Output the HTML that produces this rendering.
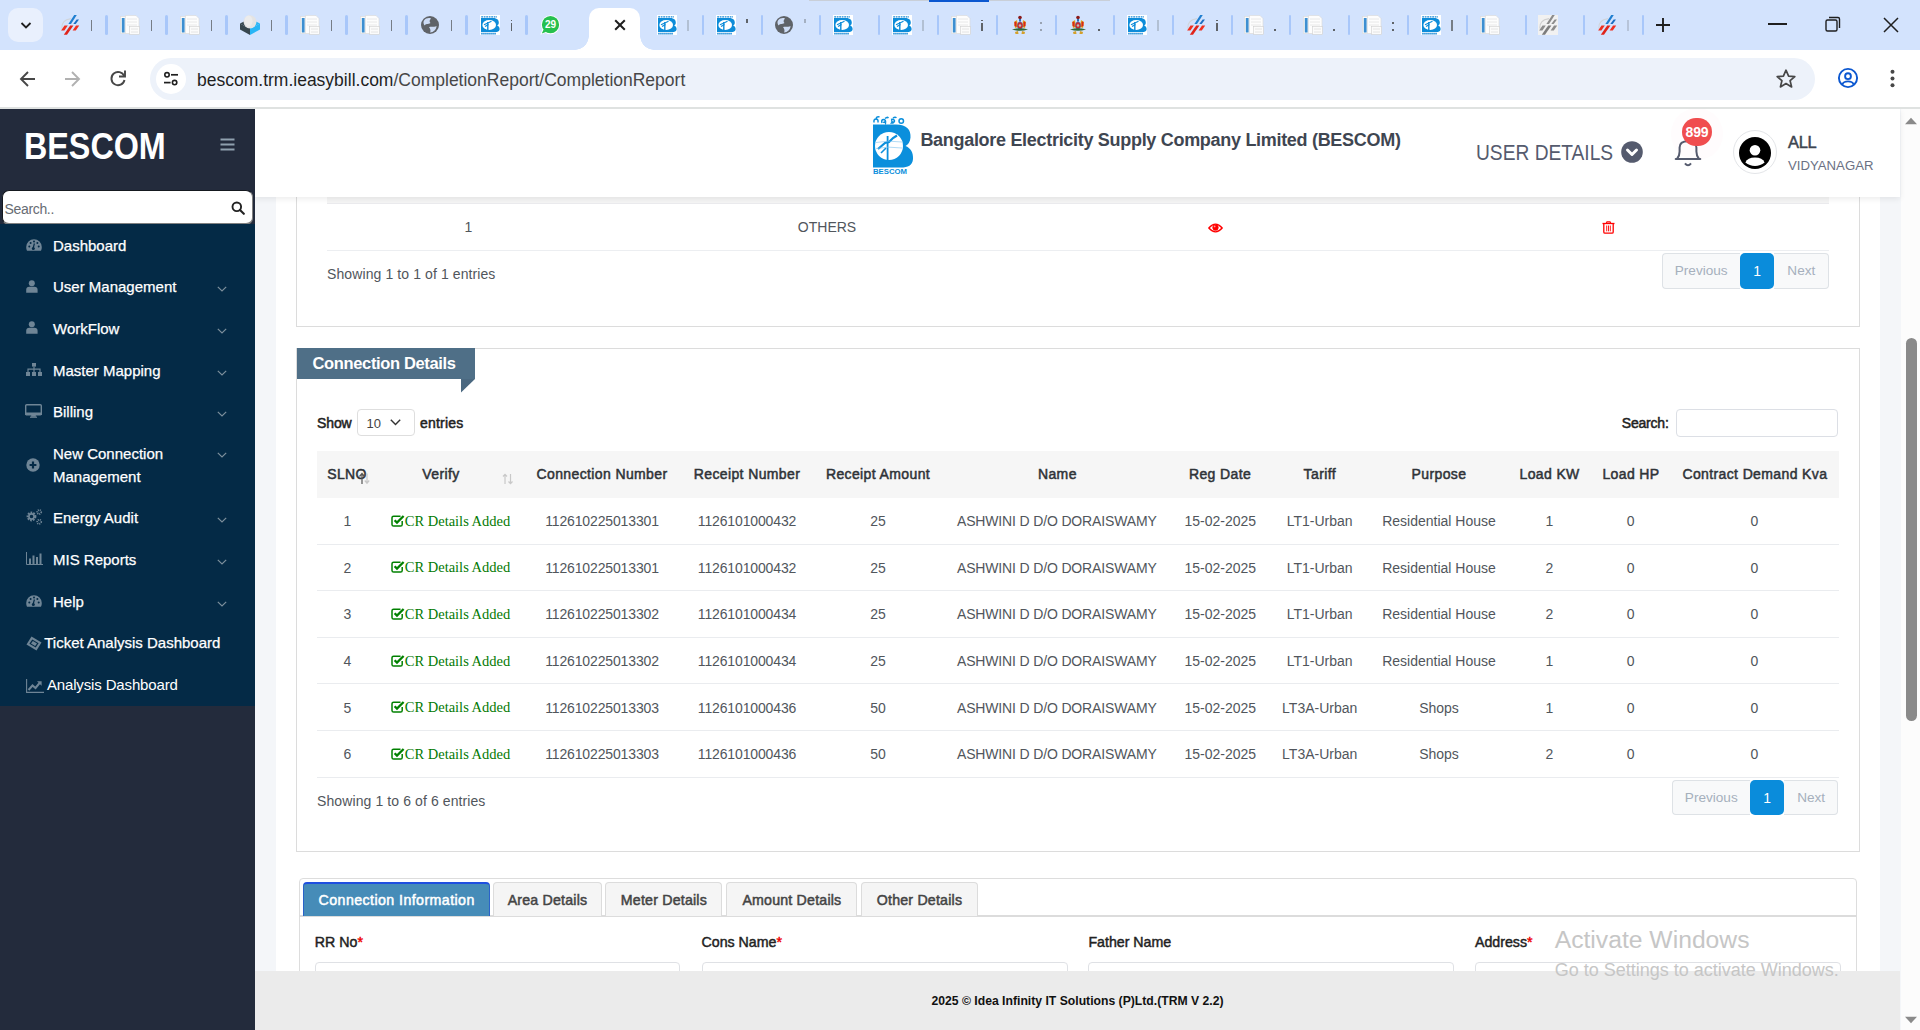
<!DOCTYPE html>
<html><head><meta charset="utf-8"><title>Completion Report</title>
<style>
*{box-sizing:border-box;margin:0;padding:0}
html,body{width:1920px;height:1030px;overflow:hidden;background:#fff;font-family:"Liberation Sans",sans-serif}
.abs{position:absolute}
#tabstrip{position:absolute;left:0;top:0;width:1920px;height:50px;background:#d3e3fd}
#toolbar{position:absolute;left:0;top:50px;width:1920px;height:57px;background:#fff;border-radius:10px 10px 0 0}
#tbline{position:absolute;left:0;top:107px;width:1920px;height:2px;background:#dfe2e1}
#page{position:absolute;left:0;top:109px;width:1920px;height:921px;background:#f4f6f9;overflow:hidden}
#sidebar{position:absolute;left:0;top:0;width:255px;height:921px;background:#232b3c}
#header{position:absolute;left:255px;top:0;width:1645px;height:88px;background:#fff;box-shadow:0 2px 6px rgba(0,0,0,.08)}
#container{position:absolute;left:276px;top:0;width:1604px;height:921px;background:#fff}
#footer{position:absolute;left:255px;top:862px;width:1645px;height:60px;background:#ebebeb}
#scrollbar{position:absolute;left:1901px;top:0;width:19px;height:921px;background:#fcfcfc}

</style></head><body>
<svg width="0" height="0" style="position:absolute">
<defs>
<symbol id="i-stripes" viewBox="0 0 20 20">
<path d="M1.8 13.5 Q1 5 11 3.6" fill="none" stroke="#d0d4da" stroke-width="1.1"/>
<path d="M14.2 0 H16.8 L11 9 H8.4Z" fill="#1f7fd0"/>
<path d="M16.6 4.6 H19 L15.7 9 H13.3Z" fill="#1b6fc2"/>
<path d="M4.5 10.5 H7.8 L4.4 15.6 H1.1Z" fill="#f0301f"/>
<path d="M10.2 10.5 H13.4 L7 19.8 H3.8Z" fill="#e0241a"/>
<path d="M16 10.5 H19.2 L15.8 15.6 H12.6Z" fill="#f0301f"/>
</symbol>
<symbol id="i-stripesg" viewBox="0 0 20 20">
<rect x="0" y="0" width="20" height="20" fill="#f1f1f1"/>
<path d="M1.8 13.5 Q1 5 11 3.6" fill="none" stroke="#cfcfcf" stroke-width="1.1"/>
<path d="M14.2 0 H16.8 L11 9 H8.4Z" fill="#8c8c8c"/>
<path d="M16.6 4.6 H19 L15.7 9 H13.3Z" fill="#8c8c8c"/>
<path d="M4.5 10.5 H7.8 L4.4 15.6 H1.1Z" fill="#8c8c8c"/>
<path d="M10.2 10.5 H13.4 L7 19.8 H3.8Z" fill="#7c7c7c"/>
<path d="M16 10.5 H19.2 L15.8 15.6 H12.6Z" fill="#8c8c8c"/>
</symbol>
<symbol id="i-doc" viewBox="0 0 20 20">
<rect x="0.5" y="1.5" width="12" height="17" fill="#fafafa" stroke="#dcdcdc" stroke-width="0.6"/>
<rect x="1.8" y="3" width="2.8" height="14.5" fill="#3d8fd1"/>
<path d="M5.5 0.5 H16 L19 3.5 V18.5 H5.5Z" fill="#fdfdfd" stroke="#d8d8d8" stroke-width="0.6"/>
<path d="M7 4 H17 M7 7 H17 M7 10 H17" stroke="#e2e2e2" stroke-width="0.8"/>
<rect x="9.5" y="11.5" width="10" height="8" fill="#fbfbfb" stroke="#cfcfcf" stroke-width="0.6"/>
<path d="M11 14 H18 M11 17 H18" stroke="#e0e0e0" stroke-width="0.8"/>
</symbol>
<symbol id="i-cube" viewBox="0 0 20 20">
<path d="M0 8.5 L10 14 L10 20 L0 14.5Z" fill="#37474f"/>
<path d="M0 8.5 L5 6 L10 9 L10 14Z" fill="#37474f"/>
<path d="M10 14 L20 8.5 L20 14.5 L10 20Z" fill="#29b6f6"/>
<path d="M10 9 L15 6 L20 8.5 L10 14Z" fill="#29b6f6"/>
<ellipse cx="10" cy="6.8" rx="6.5" ry="6.5" fill="#e4e4e4"/>
<ellipse cx="8.5" cy="6" rx="4" ry="5.5" fill="#ececec"/>
</symbol>
<symbol id="i-globe" viewBox="0 0 20 20">
<circle cx="10" cy="10" r="9" fill="#5f6368"/>
<path d="M4 5.5 C6 3 9 2.5 11 3.5 C9.5 5 9 6.5 10.5 8 C8 9.5 5.5 8.5 4.5 10.5 C3.5 9 3 7 4 5.5Z" fill="#d3e3fd" opacity="0.95"/>
<path d="M9 12 C12 11 15 12.5 16.5 11 C16.5 14.5 13.5 17.5 10 17.5 C11 16 10.5 14 9 12Z" fill="#d3e3fd" opacity="0.95"/>
</symbol>
<symbol id="i-bescom" viewBox="0 0 20 20">
<rect x="0" y="0" width="20" height="20" fill="#fff"/>
<path d="M1.2 1.8 H17" stroke="#1c8ad6" stroke-width="1.2" stroke-dasharray="1.8 0.7"/>
<path d="M1 3 H13 C17.5 3 19 5.5 18.8 8 C18.6 9.5 17.8 10 17.2 10.5 C19.2 11.3 19.8 13.2 19.6 14.5 C19.3 16.5 17.5 17 15 17 H1Z" fill="#0d8cd9"/>
<ellipse cx="9.2" cy="10" rx="6.8" ry="4.9" fill="#fff"/>
<path d="M7.8 7 V15" stroke="#0d8cd9" stroke-width="1.4"/>
<path d="M4 9.8 L11.5 6.3 M5 11.5 L8.5 9.5" stroke="#0d8cd9" stroke-width="1.2"/>
<path d="M1.2 18.6 H16" stroke="#1c8ad6" stroke-width="1.6" stroke-dasharray="1.5 0.5"/>
</symbol>
<symbol id="i-wa" viewBox="0 0 20 20">
<circle cx="10.5" cy="9.7" r="9.5" fill="#fff"/>
<path d="M2.5 14 L0.3 19.8 L7 17.2Z" fill="#fff"/>
<path d="M3.6 14.6 L1.8 18.6 L6.4 16.8Z" fill="#25c04e"/>
<circle cx="10.5" cy="9.7" r="8.6" fill="#25c04e"/>
<text x="10.5" y="13.4" text-anchor="middle" font-family="Liberation Sans" font-weight="bold" font-size="10" fill="#fff">29</text>
</symbol>
<symbol id="i-emblem" viewBox="0 0 20 20">
<circle cx="10" cy="2.5" r="1.8" fill="#8b1a1a"/>
<rect x="9" y="4" width="2" height="2.5" fill="#2a6fb8"/>
<path d="M4 7 L7 5 L8 12 L5 13Z" fill="#e0a81a"/>
<path d="M16 7 L13 5 L12 12 L15 13Z" fill="#e0a81a"/>
<path d="M4.5 7 Q5.5 6 6.5 7 L6.5 12 L4.5 11Z" fill="#d9261c"/>
<path d="M15.5 7 Q14.5 6 13.5 7 L13.5 12 L15.5 11Z" fill="#d9261c"/>
<ellipse cx="10" cy="10.5" rx="2.6" ry="3.6" fill="#d02a2a" stroke="#3050a0" stroke-width="0.5"/>
<circle cx="10" cy="10.5" r="1.2" fill="#bbb"/>
<path d="M2 14.5 Q10 12 18 14.5 Q10 17 2 14.5Z" fill="#2f6a3a"/>
<path d="M5 17 L8 16 L8.5 19 L5.5 19Z M15 17 L12 16 L11.5 19 L14.5 19Z" fill="#d4a02a"/>
</symbol>
</defs></svg>
<div id="tabstrip">
<div class="abs" style="left:8px;top:8px;width:35px;height:34px;border-radius:10px;background:#e9f0fd"></div>
<svg class="abs" style="left:19px;top:19px" width="14" height="12" viewBox="0 0 14 12"><path d="M2.5 4 L7 8.5 L11.5 4" fill="none" stroke="#1f1f1f" stroke-width="1.8"/></svg>
<svg class="abs" style="left:60px;top:15px" width="20" height="20"><use href="#i-stripes"/></svg>
<div class="abs" style="left:90.75px;top:20px;width:1.3px;height:11px;background:#5f6368;opacity:0.8"></div>
<div class="abs" style="left:105.20px;top:14.5px;width:2.5px;height:20px;border-radius:1.5px;background:#a8c7fa"></div>
<svg class="abs" style="left:120px;top:15px" width="20" height="20"><use href="#i-doc"/></svg>
<div class="abs" style="left:150.75px;top:20px;width:1.3px;height:11px;background:#5f6368;opacity:0.8"></div>
<div class="abs" style="left:165.20px;top:14.5px;width:2.5px;height:20px;border-radius:1.5px;background:#a8c7fa"></div>
<svg class="abs" style="left:180px;top:15px" width="20" height="20"><use href="#i-doc"/></svg>
<div class="abs" style="left:210.75px;top:20px;width:1.3px;height:11px;background:#5f6368;opacity:0.8"></div>
<div class="abs" style="left:225.20px;top:14.5px;width:2.5px;height:20px;border-radius:1.5px;background:#a8c7fa"></div>
<svg class="abs" style="left:240px;top:15px" width="20" height="20"><use href="#i-cube"/></svg>
<div class="abs" style="left:270.75px;top:20px;width:1.3px;height:11px;background:#5f6368;opacity:0.8"></div>
<div class="abs" style="left:285.20px;top:14.5px;width:2.5px;height:20px;border-radius:1.5px;background:#a8c7fa"></div>
<svg class="abs" style="left:300px;top:15px" width="20" height="20"><use href="#i-doc"/></svg>
<div class="abs" style="left:330.75px;top:20px;width:1.3px;height:11px;background:#5f6368;opacity:0.8"></div>
<div class="abs" style="left:345.20px;top:14.5px;width:2.5px;height:20px;border-radius:1.5px;background:#a8c7fa"></div>
<svg class="abs" style="left:360px;top:15px" width="20" height="20"><use href="#i-doc"/></svg>
<div class="abs" style="left:390.75px;top:20px;width:1.3px;height:11px;background:#5f6368;opacity:0.8"></div>
<div class="abs" style="left:405.20px;top:14.5px;width:2.5px;height:20px;border-radius:1.5px;background:#a8c7fa"></div>
<svg class="abs" style="left:420px;top:15px" width="20" height="20"><use href="#i-globe"/></svg>
<div class="abs" style="left:450.75px;top:20px;width:1.3px;height:11px;background:#5f6368;opacity:0.8"></div>
<div class="abs" style="left:465.20px;top:14.5px;width:2.5px;height:20px;border-radius:1.5px;background:#a8c7fa"></div>
<svg class="abs" style="left:480px;top:15px" width="20" height="20"><use href="#i-bescom"/></svg>
<div class="abs" style="left:510.75px;top:23px;width:1.5px;height:8px;background:#5f6368;opacity:1"></div><div class="abs" style="left:510.75px;top:19.5px;width:1.5px;height:1.5px;background:#5f6368;opacity:1"></div>
<div class="abs" style="left:525.20px;top:14.5px;width:2.5px;height:20px;border-radius:1.5px;background:#a8c7fa"></div>
<svg class="abs" style="left:540px;top:15px" width="20" height="20"><use href="#i-wa"/></svg>

<div class="abs" style="left:589px;top:7.5px;width:51px;height:42.5px;background:#fff;border-radius:10px 10px 0 0"></div>
<div class="abs" style="left:575px;top:36px;width:14px;height:14px;background:radial-gradient(circle at 0 0, #d3e3fd 13.5px, #fff 14px)"></div>
<div class="abs" style="left:640px;top:36px;width:14px;height:14px;background:radial-gradient(circle at 100% 0, #d3e3fd 13.5px, #fff 14px)"></div>
<svg class="abs" style="left:614px;top:19px" width="12" height="12" viewBox="0 0 12 12"><path d="M1.2 1.2 L10.8 10.8 M10.8 1.2 L1.2 10.8" stroke="#1f1f1f" stroke-width="2"/></svg>
<svg class="abs" style="left:657.00px;top:15px" width="20" height="20"><use href="#i-bescom"/></svg>
<div class="abs" style="left:687.25px;top:20px;width:1.3px;height:11px;background:#5f6368;opacity:0.27999999999999997"></div>
<div class="abs" style="left:701.70px;top:14.5px;width:2.5px;height:20px;border-radius:1.5px;background:#a8c7fa"></div>
<svg class="abs" style="left:716.00px;top:15px" width="20" height="20"><use href="#i-bescom"/></svg>
<div class="abs" style="left:746.25px;top:19px;width:1.5px;height:3.5px;background:#5f6368;opacity:1"></div>
<div class="abs" style="left:760.70px;top:14.5px;width:2.5px;height:20px;border-radius:1.5px;background:#a8c7fa"></div>
<svg class="abs" style="left:774.00px;top:15px" width="20" height="20"><use href="#i-globe"/></svg>
<div class="abs" style="left:804.25px;top:19px;width:1.5px;height:3.5px;background:#5f6368;opacity:0.4"></div>
<div class="abs" style="left:818.70px;top:14.5px;width:2.5px;height:20px;border-radius:1.5px;background:#a8c7fa"></div>
<svg class="abs" style="left:833.00px;top:15px" width="20" height="20"><use href="#i-bescom"/></svg>

<div class="abs" style="left:877.70px;top:14.5px;width:2.5px;height:20px;border-radius:1.5px;background:#a8c7fa"></div>
<svg class="abs" style="left:892.00px;top:15px" width="20" height="20"><use href="#i-bescom"/></svg>
<div class="abs" style="left:922.25px;top:20px;width:1.3px;height:11px;background:#5f6368;opacity:0.27999999999999997"></div>
<div class="abs" style="left:936.70px;top:14.5px;width:2.5px;height:20px;border-radius:1.5px;background:#a8c7fa"></div>
<svg class="abs" style="left:951.00px;top:15px" width="20" height="20"><use href="#i-doc"/></svg>
<div class="abs" style="left:981.25px;top:23px;width:1.5px;height:8px;background:#5f6368;opacity:1"></div><div class="abs" style="left:981.25px;top:19.5px;width:1.5px;height:1.5px;background:#5f6368;opacity:1"></div>
<div class="abs" style="left:995.70px;top:14.5px;width:2.5px;height:20px;border-radius:1.5px;background:#a8c7fa"></div>
<svg class="abs" style="left:1010.00px;top:15px" width="20" height="20"><use href="#i-emblem"/></svg>
<div class="abs" style="left:1040.25px;top:22px;width:1.5px;height:1.5px;background:#5f6368;opacity:0.5"></div><div class="abs" style="left:1040.25px;top:29px;width:1.5px;height:1.5px;background:#5f6368;opacity:0.5"></div>
<div class="abs" style="left:1054.70px;top:14.5px;width:2.5px;height:20px;border-radius:1.5px;background:#a8c7fa"></div>
<svg class="abs" style="left:1068.00px;top:15px" width="20" height="20"><use href="#i-emblem"/></svg>
<div class="abs" style="left:1098.25px;top:29px;width:1.5px;height:1.5px;background:#5f6368;opacity:1"></div>
<div class="abs" style="left:1112.70px;top:14.5px;width:2.5px;height:20px;border-radius:1.5px;background:#a8c7fa"></div>
<svg class="abs" style="left:1127.00px;top:15px" width="20" height="20"><use href="#i-bescom"/></svg>
<div class="abs" style="left:1157.25px;top:20px;width:1.3px;height:11px;background:#5f6368;opacity:0.27999999999999997"></div>
<div class="abs" style="left:1171.70px;top:14.5px;width:2.5px;height:20px;border-radius:1.5px;background:#a8c7fa"></div>
<svg class="abs" style="left:1186.00px;top:15px" width="20" height="20"><use href="#i-stripes"/></svg>
<div class="abs" style="left:1216.25px;top:23px;width:1.5px;height:8px;background:#5f6368;opacity:1"></div><div class="abs" style="left:1216.25px;top:19.5px;width:1.5px;height:1.5px;background:#5f6368;opacity:1"></div>
<div class="abs" style="left:1230.70px;top:14.5px;width:2.5px;height:20px;border-radius:1.5px;background:#a8c7fa"></div>
<svg class="abs" style="left:1244.00px;top:15px" width="20" height="20"><use href="#i-doc"/></svg>
<div class="abs" style="left:1274.25px;top:29px;width:1.5px;height:1.5px;background:#5f6368;opacity:1"></div>
<div class="abs" style="left:1288.70px;top:14.5px;width:2.5px;height:20px;border-radius:1.5px;background:#a8c7fa"></div>
<svg class="abs" style="left:1303.00px;top:15px" width="20" height="20"><use href="#i-doc"/></svg>
<div class="abs" style="left:1333.25px;top:29px;width:1.5px;height:1.5px;background:#5f6368;opacity:1"></div>
<div class="abs" style="left:1347.70px;top:14.5px;width:2.5px;height:20px;border-radius:1.5px;background:#a8c7fa"></div>
<svg class="abs" style="left:1362.00px;top:15px" width="20" height="20"><use href="#i-doc"/></svg>
<div class="abs" style="left:1392.25px;top:22px;width:1.5px;height:1.5px;background:#5f6368;opacity:1"></div><div class="abs" style="left:1392.25px;top:29px;width:1.5px;height:1.5px;background:#5f6368;opacity:1"></div>
<div class="abs" style="left:1406.70px;top:14.5px;width:2.5px;height:20px;border-radius:1.5px;background:#a8c7fa"></div>
<svg class="abs" style="left:1421.00px;top:15px" width="20" height="20"><use href="#i-bescom"/></svg>
<div class="abs" style="left:1451.25px;top:20px;width:1.3px;height:11px;background:#5f6368;opacity:0.8"></div>
<div class="abs" style="left:1465.70px;top:14.5px;width:2.5px;height:20px;border-radius:1.5px;background:#a8c7fa"></div>
<svg class="abs" style="left:1480.00px;top:15px" width="20" height="20"><use href="#i-doc"/></svg>

<div class="abs" style="left:1524.70px;top:14.5px;width:2.5px;height:20px;border-radius:1.5px;background:#a8c7fa"></div>
<svg class="abs" style="left:1538.00px;top:15px" width="20" height="20"><use href="#i-stripesg"/></svg>

<div class="abs" style="left:1582.70px;top:14.5px;width:2.5px;height:20px;border-radius:1.5px;background:#a8c7fa"></div>
<svg class="abs" style="left:1597.00px;top:15px" width="20" height="20"><use href="#i-stripes"/></svg>
<div class="abs" style="left:1627.25px;top:20px;width:1.3px;height:11px;background:#5f6368;opacity:0.24"></div>
<div class="abs" style="left:1641.70px;top:14.5px;width:2.5px;height:20px;border-radius:1.5px;background:#a8c7fa"></div>
<svg class="abs" style="left:1654px;top:16px" width="18" height="18" viewBox="0 0 18 18"><path d="M9 2 V16 M2 9 H16" stroke="#1f1f1f" stroke-width="1.9"/></svg>
<div class="abs" style="left:1768px;top:23px;width:19px;height:1.6px;background:#1f1f1f"></div>
<svg class="abs" style="left:1824px;top:15px" width="18" height="18" viewBox="0 0 18 18"><rect x="2" y="5" width="11" height="11" rx="1.5" fill="none" stroke="#1f1f1f" stroke-width="1.4"/><path d="M5 2.5 H14 Q15.5 2.5 15.5 4 V13" fill="none" stroke="#1f1f1f" stroke-width="1.4"/></svg>
<svg class="abs" style="left:1881px;top:15px" width="20" height="20" viewBox="0 0 20 20"><path d="M3 3 L17 17 M17 3 L3 17" stroke="#1f1f1f" stroke-width="1.5"/></svg>
<div class="abs" style="left:809px;top:0;width:301px;height:1px;background:#c9cfd8"></div>
<div class="abs" style="left:929px;top:0;width:60px;height:1.5px;background:#0b57d0"></div>
</div>
<div id="toolbar">
<svg class="abs" style="left:18px;top:20px" width="20" height="18" viewBox="0 0 20 18"><path d="M17 9 H3.5 M10 2 L3 9 L10 16" fill="none" stroke="#474747" stroke-width="1.9"/></svg>
<svg class="abs" style="left:62px;top:20px" width="20" height="18" viewBox="0 0 20 18"><path d="M3 9 H16.5 M10 2 L17 9 L10 16" fill="none" stroke="#b1b1b1" stroke-width="1.9"/></svg>
<svg class="abs" style="left:107.6px;top:18.4px" width="20" height="20" viewBox="0 0 20 20"><path d="M16.2 8.2 A6.6 6.6 0 1 0 16.5 12" fill="none" stroke="#474747" stroke-width="1.9"/><path d="M17 2.5 V8.5 H11" fill="none" stroke="#474747" stroke-width="1.9"/></svg>
<div class="abs" style="left:150px;top:8px;width:1665px;height:42px;border-radius:21px;background:#edf2fa"></div>
<div class="abs" style="left:156px;top:14px;width:30px;height:30px;border-radius:15px;background:#fff"></div>
<svg class="abs" style="left:162px;top:20px" width="18" height="18" viewBox="0 0 18 18"><circle cx="5" cy="4.8" r="2.2" fill="none" stroke="#1f1f1f" stroke-width="1.6"/><path d="M9 4.8 H16" stroke="#1f1f1f" stroke-width="1.7"/><circle cx="12.6" cy="12.6" r="2.2" fill="none" stroke="#1f1f1f" stroke-width="1.6"/><path d="M2 12.6 H8.6" stroke="#1f1f1f" stroke-width="1.7"/></svg>
<div class="abs" style="left:197px;top:18.8px;font-size:17.5px;line-height:22px;color:#1f1f1f;white-space:nowrap">bescom.trm.ieasybill.com<span style="color:#474747">/CompletionReport/CompletionReport</span></div>
<svg class="abs" style="left:1774.5px;top:18.3px" width="22" height="22" viewBox="0 0 22 22"><path d="M11 2.2 L13.6 8.1 L19.8 8.6 L15.1 12.7 L16.6 18.9 L11 15.6 L5.4 18.9 L6.9 12.7 L2.2 8.6 L8.4 8.1Z" fill="none" stroke="#474747" stroke-width="1.7" stroke-linejoin="round"/></svg>
<svg class="abs" style="left:1836.5px;top:17.3px" width="22" height="22" viewBox="0 0 22 22"><circle cx="11" cy="11" r="9.1" fill="none" stroke="#0b57d0" stroke-width="1.9"/><circle cx="11" cy="9.2" r="2.9" fill="none" stroke="#0b57d0" stroke-width="1.9"/><path d="M5.4 17.3 Q6.5 14.4 11 14.4 Q15.5 14.4 16.6 17.3" fill="none" stroke="#0b57d0" stroke-width="1.9"/></svg>
<svg class="abs" style="left:1886px;top:18px" width="12" height="22" viewBox="0 0 12 22"><circle cx="6.5" cy="3.7" r="2" fill="#474747"/><circle cx="6.5" cy="10.5" r="2" fill="#474747"/><circle cx="6.5" cy="17.3" r="2" fill="#474747"/></svg>
</div>
<div id="tbline"></div>
<div id="page">
<div id="sidebar">
<div class="abs" style="left:24.3px;top:19.83px;font-size:36px;line-height:36px;color:#fff;font-weight:bold;white-space:nowrap;transform:scaleX(0.897);transform-origin:0 0">BESCOM</div>
<svg class="abs" style="left:220px;top:29px" width="15" height="13" viewBox="0 0 15 13"><path d="M0.5 1.5 H14.5 M0.5 6.5 H14.5 M0.5 11.5 H14.5" stroke="#8fa0ae" stroke-width="2"/></svg>
<div class="abs" style="left:1.5px;top:81.30000000000001px;width:251.5px;height:34.7px;background:#fff;border-radius:7px;border:1px solid #15191f;border-right:1.5px solid #808080;border-bottom:2px solid #808080"></div>
<div class="abs" style="left:4.6px;top:92.55px;font-size:14px;line-height:14px;color:#676c73;font-weight:normal;white-space:nowrap;letter-spacing:-0.35px">Search..</div>
<svg class="abs" style="left:231px;top:92px" width="14" height="14" viewBox="0 0 14 14"><circle cx="5.8" cy="5.8" r="4.3" fill="none" stroke="#222" stroke-width="1.9"/><path d="M9 9 L12.8 12.8" stroke="#222" stroke-width="2.1" stroke-linecap="round"/></svg>
<div class="abs" style="left:0;top:115px;width:255px;height:482px;background:#042a46"></div>
<div class="abs" style="left:25.6px;top:130.40px;line-height:0"><svg width="16" height="12" viewBox="0 0 16 12"><path d="M8 0.2 A7.8 7.8 0 0 0 0.2 8 Q0.2 10.5 1 11.8 H15 Q15.8 10.5 15.8 8 A7.8 7.8 0 0 0 8 0.2Z" fill="#6f8596"/><circle cx="3.3" cy="7.6" r="1" fill="#042a46"/><circle cx="4.6" cy="3.9" r="1" fill="#042a46"/><circle cx="8" cy="2.4" r="1" fill="#042a46"/><circle cx="12.7" cy="7.6" r="1" fill="#042a46"/><circle cx="11.4" cy="3.9" r="1" fill="#042a46"/><path d="M8.4 4.5 L7.2 9" stroke="#042a46" stroke-width="1.2"/><circle cx="7.3" cy="9.5" r="1.5" fill="#042a46"/></svg></div>
<div class="abs" style="left:53px;top:129.30px;font-size:15px;line-height:15px;color:#fff;font-weight:normal;white-space:nowrap;-webkit-text-stroke:0.25px #fff">Dashboard</div>
<div class="abs" style="left:25.6px;top:171.00px;line-height:0"><svg width="12" height="13" viewBox="0 0 12 13"><circle cx="5.8" cy="3.2" r="3" fill="#6f8596"/><path d="M0.2 12.8 V10 Q0.2 6.8 3.3 6.8 H8.3 Q11.6 6.8 11.6 10 V12.8Z" fill="#6f8596"/></svg></div>
<div class="abs" style="left:53px;top:170.20px;font-size:15px;line-height:15px;color:#fff;font-weight:normal;white-space:nowrap;-webkit-text-stroke:0.25px #fff">User Management</div>
<svg class="abs" style="left:216.5px;top:176.90px" width="10" height="6" viewBox="0 0 10 6"><path d="M0.8 0.8 L5 5 L9.2 0.8" fill="none" stroke="#7d8f9c" stroke-width="1.2"/></svg>
<div class="abs" style="left:25.6px;top:212.00px;line-height:0"><svg width="12" height="13" viewBox="0 0 12 13"><circle cx="5.8" cy="3.2" r="3" fill="#6f8596"/><path d="M0.2 12.8 V10 Q0.2 6.8 3.3 6.8 H8.3 Q11.6 6.8 11.6 10 V12.8Z" fill="#6f8596"/></svg></div>
<div class="abs" style="left:53px;top:212.05px;font-size:15px;line-height:15px;color:#fff;font-weight:normal;white-space:nowrap;-webkit-text-stroke:0.25px #fff">WorkFlow</div>
<svg class="abs" style="left:216.5px;top:218.75px" width="10" height="6" viewBox="0 0 10 6"><path d="M0.8 0.8 L5 5 L9.2 0.8" fill="none" stroke="#7d8f9c" stroke-width="1.2"/></svg>
<div class="abs" style="left:25.7px;top:254.20px;line-height:0"><svg width="16" height="13" viewBox="0 0 16 13"><rect x="6" y="0" width="4" height="3.6" fill="#6f8596"/><path d="M8 3.6 V6.2 M2 9 V6.2 H14 V9 M8 6.2 V9" fill="none" stroke="#6f8596" stroke-width="1.2"/><rect x="0" y="9" width="4" height="4" fill="#6f8596"/><rect x="6" y="9" width="4" height="4" fill="#6f8596"/><rect x="12" y="9" width="4" height="4" fill="#6f8596"/></svg></div>
<div class="abs" style="left:53px;top:253.90px;font-size:15px;line-height:15px;color:#fff;font-weight:normal;white-space:nowrap;-webkit-text-stroke:0.25px #fff">Master Mapping</div>
<svg class="abs" style="left:216.5px;top:260.60px" width="10" height="6" viewBox="0 0 10 6"><path d="M0.8 0.8 L5 5 L9.2 0.8" fill="none" stroke="#7d8f9c" stroke-width="1.2"/></svg>
<div class="abs" style="left:25.2px;top:295.00px;line-height:0"><svg width="17" height="14" viewBox="0 0 17 14"><rect x="0.7" y="0.7" width="15.6" height="10" rx="1" fill="none" stroke="#6f8596" stroke-width="1.4"/><rect x="0" y="8.5" width="17" height="2.5" fill="#6f8596"/><path d="M6.3 11 L6 12.8 H11 L10.7 11Z" fill="#6f8596"/><rect x="5" y="12.6" width="7" height="1.2" fill="#6f8596"/></svg></div>
<div class="abs" style="left:53px;top:295.10px;font-size:15px;line-height:15px;color:#fff;font-weight:normal;white-space:nowrap;-webkit-text-stroke:0.25px #fff">Billing</div>
<svg class="abs" style="left:216.5px;top:301.80px" width="10" height="6" viewBox="0 0 10 6"><path d="M0.8 0.8 L5 5 L9.2 0.8" fill="none" stroke="#7d8f9c" stroke-width="1.2"/></svg>
<div class="abs" style="left:25.5px;top:348.80px;line-height:0"><svg width="14" height="14" viewBox="0 0 14 14"><circle cx="7" cy="7" r="6.7" fill="#6f8596"/><path d="M7 3.6 V10.4 M3.6 7 H10.4" stroke="#042a46" stroke-width="2.2"/></svg></div>
<div class="abs" style="left:53px;top:337.00px;font-size:15px;line-height:15px;color:#fff;font-weight:normal;white-space:nowrap;-webkit-text-stroke:0.25px #fff">New Connection</div>
<div class="abs" style="left:53px;top:359.50px;font-size:15px;line-height:15px;color:#fff;font-weight:normal;white-space:nowrap;-webkit-text-stroke:0.25px #fff">Management</div>
<svg class="abs" style="left:216.5px;top:342.70px" width="10" height="6" viewBox="0 0 10 6"><path d="M0.8 0.8 L5 5 L9.2 0.8" fill="none" stroke="#7d8f9c" stroke-width="1.2"/></svg>
<div class="abs" style="left:25.7px;top:399.50px;line-height:0"><svg width="17" height="16" viewBox="0 0 17 16"><circle cx="5.5" cy="7.5" r="3.6" fill="none" stroke="#6f8596" stroke-width="2.6" stroke-dasharray="1.6 1"/><circle cx="5.5" cy="7.5" r="2.6" fill="none" stroke="#6f8596" stroke-width="1.6"/><circle cx="13.2" cy="3" r="2" fill="none" stroke="#6f8596" stroke-width="1.8" stroke-dasharray="1 0.8"/><circle cx="13.2" cy="12.8" r="2" fill="none" stroke="#6f8596" stroke-width="1.8" stroke-dasharray="1 0.8"/></svg></div>
<div class="abs" style="left:53px;top:401.00px;font-size:15px;line-height:15px;color:#fff;font-weight:normal;white-space:nowrap;-webkit-text-stroke:0.25px #fff">Energy Audit</div>
<svg class="abs" style="left:216.5px;top:407.70px" width="10" height="6" viewBox="0 0 10 6"><path d="M0.8 0.8 L5 5 L9.2 0.8" fill="none" stroke="#7d8f9c" stroke-width="1.2"/></svg>
<div class="abs" style="left:26px;top:442.80px;line-height:0"><svg width="17" height="13" viewBox="0 0 17 13"><path d="M0.5 0 V12.5 H17" fill="none" stroke="#6f8596" stroke-width="1"/><rect x="3" y="6.5" width="2" height="5.5" fill="#6f8596"/><rect x="6.5" y="3.5" width="2" height="8.5" fill="#6f8596"/><rect x="10" y="5" width="2" height="7" fill="#6f8596"/><rect x="13.5" y="1.5" width="2" height="10.5" fill="#6f8596"/></svg></div>
<div class="abs" style="left:53px;top:443.00px;font-size:15px;line-height:15px;color:#fff;font-weight:normal;white-space:nowrap;-webkit-text-stroke:0.25px #fff">MIS Reports</div>
<svg class="abs" style="left:216.5px;top:449.70px" width="10" height="6" viewBox="0 0 10 6"><path d="M0.8 0.8 L5 5 L9.2 0.8" fill="none" stroke="#7d8f9c" stroke-width="1.2"/></svg>
<div class="abs" style="left:25.8px;top:486.00px;line-height:0"><svg width="16" height="12" viewBox="0 0 16 12"><path d="M8 0.2 A7.8 7.8 0 0 0 0.2 8 Q0.2 10.5 1 11.8 H15 Q15.8 10.5 15.8 8 A7.8 7.8 0 0 0 8 0.2Z" fill="#6f8596"/><circle cx="3.3" cy="7.6" r="1" fill="#042a46"/><circle cx="4.6" cy="3.9" r="1" fill="#042a46"/><circle cx="8" cy="2.4" r="1" fill="#042a46"/><circle cx="12.7" cy="7.6" r="1" fill="#042a46"/><circle cx="11.4" cy="3.9" r="1" fill="#042a46"/><path d="M8.4 4.5 L7.2 9" stroke="#042a46" stroke-width="1.2"/><circle cx="7.3" cy="9.5" r="1.5" fill="#042a46"/></svg></div>
<div class="abs" style="left:53px;top:484.90px;font-size:15px;line-height:15px;color:#fff;font-weight:normal;white-space:nowrap;-webkit-text-stroke:0.25px #fff">Help</div>
<svg class="abs" style="left:216.5px;top:491.60px" width="10" height="6" viewBox="0 0 10 6"><path d="M0.8 0.8 L5 5 L9.2 0.8" fill="none" stroke="#7d8f9c" stroke-width="1.2"/></svg>
<div class="abs" style="left:26px;top:527px;line-height:0"><svg width="16" height="15" viewBox="0 0 16 15"><path d="M5.5 0.5 L15.5 6.5 L10.5 14.5 L0.5 8.5 Z" fill="#6f8596" transform="rotate(0)"/><path d="M6.3 3.6 L12.6 7.3 L9.7 11.4 L3.4 7.7Z" fill="#042a46"/><path d="M6.9 5 L11 7.4 L9.1 10 L5 7.6Z" fill="#6f8596"/></svg></div>
<div class="abs" style="left:44.2px;top:526.30px;font-size:15px;line-height:15px;color:#fff;font-weight:normal;white-space:nowrap;-webkit-text-stroke:0.25px #fff">Ticket Analysis Dashboard</div>
<div class="abs" style="left:25.6px;top:569.5px;line-height:0"><svg width="18" height="14" viewBox="0 0 18 14"><path d="M0.6 0 V13.4 H18" fill="none" stroke="#6f8596" stroke-width="1.1"/><path d="M2.5 11 L6.5 6.5 L9.5 9 L14 3.5" fill="none" stroke="#6f8596" stroke-width="2"/><path d="M11 2.2 H15.6 V6.8Z" fill="#6f8596"/></svg></div>
<div class="abs" style="left:46.9px;top:568.10px;font-size:15px;line-height:15px;color:#fff;font-weight:normal;white-space:nowrap;letter-spacing:-0.14px">Analysis Dashboard</div>
</div>
<div id="container"></div>
<div class="abs" style="left:296.00px;top:-9.00px;width:1564.00px;height:226.50px;border:1px solid #dcdcdc;background:#fff"></div>
<div class="abs" style="left:327.00px;top:41.00px;width:1502.00px;height:54.00px;background:#f5f5f5;border-bottom:1px solid #ebebee"></div>
<div class="abs" style="left:327.00px;top:141.00px;width:1502.00px;height:1.00px;background:#eceef1"></div>
<div class="abs" style="left:168.50px;width:600px;text-align:center;top:110.65px;font-size:14px;line-height:14px;color:#51565c;font-weight:normal;white-space:nowrap;">1</div>
<div class="abs" style="left:527.00px;width:600px;text-align:center;top:110.65px;font-size:14px;line-height:14px;color:#51565c;font-weight:normal;white-space:nowrap;">OTHERS</div>
<div class="abs" style="left:1208px;top:113.6px;line-height:0"><svg width="15" height="10" viewBox="0 0 15 10"><path d="M0.8 5 Q7.5 -2.6 14.2 5 Q7.5 12.6 0.8 5Z" fill="none" stroke="#f00" stroke-width="1.3"/><circle cx="7.5" cy="4.6" r="3.1" fill="#f00"/><circle cx="6.6" cy="3.4" r="0.9" fill="#fff" opacity=".6"/></svg></div>
<div class="abs" style="left:1601.5px;top:111.80000000000001px;line-height:0"><svg width="13" height="13" viewBox="0 0 13 13"><path d="M0.5 2.5 H12.5" stroke="#f00" stroke-width="1.3"/><path d="M4.3 2.2 L5 0.8 H8 L8.7 2.2" fill="none" stroke="#f00" stroke-width="1.2"/><path d="M1.8 2.8 V11 Q1.8 12.2 3 12.2 H10 Q11.2 12.2 11.2 11 V2.8" fill="none" stroke="#f00" stroke-width="1.3"/><path d="M4.7 4.5 V10.3 M6.5 4.5 V10.3 M8.3 4.5 V10.3" stroke="#f00" stroke-width="0.9"/></svg></div>
<div class="abs" style="left:327.00px;top:158.15px;font-size:14px;line-height:14px;color:#51565c;font-weight:normal;white-space:nowrap;letter-spacing:0.1px">Showing 1 to 1 of 1 entries</div>
<div class="abs" style="left:1662.00px;top:144.00px;width:78.40px;height:35.50px;background:#f8f9fa;border:1px solid #dee2e6;border-right:none;border-radius:4px 0 0 4px"></div>
<div class="abs" style="left:1740.40px;top:143.50px;width:33.60px;height:36.50px;background:#0a8cdb;border-radius:5px"></div>
<div class="abs" style="left:1774.00px;top:144.00px;width:54.60px;height:35.50px;background:#f8f9fa;border:1px solid #dee2e6;border-left:none;border-radius:0 4px 4px 0"></div>
<div class="abs" style="left:1401.20px;width:600px;text-align:center;top:155.24px;font-size:13.6px;line-height:13.6px;color:#a6b0bd;font-weight:normal;white-space:nowrap;">Previous</div>
<div class="abs" style="left:1457.20px;width:600px;text-align:center;top:154.90px;font-size:14px;line-height:14px;color:#fff;font-weight:normal;white-space:nowrap;">1</div>
<div class="abs" style="left:1501.30px;width:600px;text-align:center;top:155.24px;font-size:13.6px;line-height:13.6px;color:#a6b0bd;font-weight:normal;white-space:nowrap;">Next</div>
<div class="abs" style="left:296.00px;top:238.50px;width:1564.00px;height:504.50px;border:1px solid #dcdcdc;background:#fff"></div>
<div class="abs" style="left:297.00px;top:239.00px;width:178.00px;height:30.60px;background:#4f6f87"></div>
<svg class="abs" style="left:461px;top:269.5px" width="14" height="14" viewBox="0 0 14 14"><path d="M0 0 H14 L0 13.5Z" fill="#4a6880"/></svg>
<div class="abs" style="left:312.50px;top:246.23px;font-size:16.5px;line-height:16.5px;color:#fff;font-weight:bold;white-space:nowrap;letter-spacing:-0.35px">Connection Details</div>
<div class="abs" style="left:317.00px;top:307.15px;font-size:14px;line-height:14px;color:#222;font-weight:normal;white-space:nowrap;-webkit-text-stroke-width:0.5px;letter-spacing:-0.1px">Show</div>
<div class="abs" style="left:357.40px;top:300.20px;width:58.10px;height:27.00px;border:1px solid #dedede;border-radius:4px;background:#fff"></div>
<div class="abs" style="left:366.50px;top:308.00px;font-size:13px;line-height:13px;color:#444;font-weight:normal;white-space:nowrap;">10</div>
<svg class="abs" style="left:389.5px;top:310px" width="11" height="7" viewBox="0 0 11 7"><path d="M0.8 0.8 L5.5 5.6 L10.2 0.8" fill="none" stroke="#333" stroke-width="1.4"/></svg>
<div class="abs" style="left:420.00px;top:307.15px;font-size:14px;line-height:14px;color:#222;font-weight:normal;white-space:nowrap;-webkit-text-stroke-width:0.5px;letter-spacing:0.2px">entries</div>
<div class="abs" style="left:1621.80px;top:307.15px;font-size:14px;line-height:14px;color:#222;font-weight:normal;white-space:nowrap;-webkit-text-stroke-width:0.5px;letter-spacing:-0.2px">Search:</div>
<div class="abs" style="left:1675.50px;top:300.00px;width:162.90px;height:27.50px;border:1px solid #dcdfe5;border-radius:4px;background:#fff"></div>
<div class="abs" style="left:317.00px;top:342.00px;width:1521.80px;height:46.50px;background:#f6f6f6"></div>
<div class="abs" style="left:47.00px;width:600px;text-align:center;top:358.15px;font-size:14px;line-height:14px;color:#2f3338;font-weight:normal;white-space:nowrap;-webkit-text-stroke-width:0.5px;letter-spacing:0.38px">SLNO</div>
<div class="abs" style="left:141.00px;width:600px;text-align:center;top:358.15px;font-size:14px;line-height:14px;color:#2f3338;font-weight:normal;white-space:nowrap;-webkit-text-stroke-width:0.5px;letter-spacing:0.38px">Verify</div>
<div class="abs" style="left:302.00px;width:600px;text-align:center;top:358.15px;font-size:14px;line-height:14px;color:#2f3338;font-weight:normal;white-space:nowrap;-webkit-text-stroke-width:0.5px;letter-spacing:0.38px">Connection Number</div>
<div class="abs" style="left:447.00px;width:600px;text-align:center;top:358.15px;font-size:14px;line-height:14px;color:#2f3338;font-weight:normal;white-space:nowrap;-webkit-text-stroke-width:0.5px;letter-spacing:0.38px">Receipt Number</div>
<div class="abs" style="left:578.00px;width:600px;text-align:center;top:358.15px;font-size:14px;line-height:14px;color:#2f3338;font-weight:normal;white-space:nowrap;-webkit-text-stroke-width:0.5px;letter-spacing:0.38px">Receipt Amount</div>
<div class="abs" style="left:757.40px;width:600px;text-align:center;top:358.15px;font-size:14px;line-height:14px;color:#2f3338;font-weight:normal;white-space:nowrap;-webkit-text-stroke-width:0.5px;letter-spacing:0.38px">Name</div>
<div class="abs" style="left:920.00px;width:600px;text-align:center;top:358.15px;font-size:14px;line-height:14px;color:#2f3338;font-weight:normal;white-space:nowrap;-webkit-text-stroke-width:0.5px;letter-spacing:0.38px">Reg Date</div>
<div class="abs" style="left:1019.80px;width:600px;text-align:center;top:358.15px;font-size:14px;line-height:14px;color:#2f3338;font-weight:normal;white-space:nowrap;-webkit-text-stroke-width:0.5px;letter-spacing:0.38px">Tariff</div>
<div class="abs" style="left:1139.00px;width:600px;text-align:center;top:358.15px;font-size:14px;line-height:14px;color:#2f3338;font-weight:normal;white-space:nowrap;-webkit-text-stroke-width:0.5px;letter-spacing:0.38px">Purpose</div>
<div class="abs" style="left:1249.60px;width:600px;text-align:center;top:358.15px;font-size:14px;line-height:14px;color:#2f3338;font-weight:normal;white-space:nowrap;-webkit-text-stroke-width:0.5px;letter-spacing:0.38px">Load KW</div>
<div class="abs" style="left:1331.00px;width:600px;text-align:center;top:358.15px;font-size:14px;line-height:14px;color:#2f3338;font-weight:normal;white-space:nowrap;-webkit-text-stroke-width:0.5px;letter-spacing:0.38px">Load HP</div>
<div class="abs" style="left:1454.90px;width:600px;text-align:center;top:358.15px;font-size:14px;line-height:14px;color:#2f3338;font-weight:normal;white-space:nowrap;-webkit-text-stroke-width:0.5px;letter-spacing:0.38px">Contract Demand Kva</div>
<svg class="abs" style="left:356px;top:361px" width="16" height="16" viewBox="0 0 16 16"><path d="M6 14 V4 M3.5 6.5 L6 3.5 L8.5 6.5" fill="none" stroke="#555" stroke-width="1.2"/><path d="M11 3.5 V13 M8.8 10.5 L11 13.2 L13.2 10.5" fill="none" stroke="#c8c8c8" stroke-width="1.2"/></svg>
<svg class="abs" style="left:500px;top:362px" width="16" height="16" viewBox="0 0 16 16"><path d="M5 13 V3.5 M3 5.5 L5 3.3 L7 5.5" fill="none" stroke="#c8c8c8" stroke-width="1.2"/><path d="M10.5 3 V12.5 M8.5 10.5 L10.5 12.7 L12.5 10.5" fill="none" stroke="#c8c8c8" stroke-width="1.2"/></svg>
<div class="abs" style="left:317.00px;top:434.60px;width:1521.80px;height:1.00px;background:#eaecef"></div>
<div class="abs" style="left:47.50px;width:600px;text-align:center;top:405.15px;font-size:14px;line-height:14px;color:#51565c;font-weight:normal;white-space:nowrap;">1</div>
<div class="abs" style="left:391px;top:405.80px;line-height:0"><svg width="14" height="12" viewBox="0 0 14 12"><path d="M9.5 1.2 H2.6 Q1 1.2 1 2.8 V9.4 Q1 11 2.6 11 H9.6 Q11.2 11 11.2 9.4 V6" fill="none" stroke="#008000" stroke-width="1.5"/><path d="M3.6 5.2 L6 7.6 L12.6 1" fill="none" stroke="#008000" stroke-width="2.3"/></svg></div>
<div class="abs" style="left:404.75px;top:404.73px;font-size:14.5px;line-height:14.5px;color:#037a03;font-weight:normal;white-space:nowrap;font-family:'Liberation Serif',serif;letter-spacing:0px">CR Details Added</div>
<div class="abs" style="left:302.00px;width:600px;text-align:center;top:405.15px;font-size:14px;line-height:14px;color:#51565c;font-weight:normal;white-space:nowrap;letter-spacing:-0.14px">112610225013301</div>
<div class="abs" style="left:447.00px;width:600px;text-align:center;top:405.15px;font-size:14px;line-height:14px;color:#51565c;font-weight:normal;white-space:nowrap;letter-spacing:-0.14px">1126101000432</div>
<div class="abs" style="left:578.00px;width:600px;text-align:center;top:405.15px;font-size:14px;line-height:14px;color:#51565c;font-weight:normal;white-space:nowrap;">25</div>
<div class="abs" style="left:756.80px;width:600px;text-align:center;top:405.15px;font-size:14px;line-height:14px;color:#51565c;font-weight:normal;white-space:nowrap;letter-spacing:-0.15px">ASHWINI D D/O DORAISWAMY</div>
<div class="abs" style="left:920.30px;width:600px;text-align:center;top:405.15px;font-size:14px;line-height:14px;color:#51565c;font-weight:normal;white-space:nowrap;">15-02-2025</div>
<div class="abs" style="left:1019.70px;width:600px;text-align:center;top:405.15px;font-size:14px;line-height:14px;color:#51565c;font-weight:normal;white-space:nowrap;">LT1-Urban</div>
<div class="abs" style="left:1139.00px;width:600px;text-align:center;top:405.15px;font-size:14px;line-height:14px;color:#51565c;font-weight:normal;white-space:nowrap;">Residential House</div>
<div class="abs" style="left:1249.50px;width:600px;text-align:center;top:405.15px;font-size:14px;line-height:14px;color:#51565c;font-weight:normal;white-space:nowrap;">1</div>
<div class="abs" style="left:1330.75px;width:600px;text-align:center;top:405.15px;font-size:14px;line-height:14px;color:#51565c;font-weight:normal;white-space:nowrap;">0</div>
<div class="abs" style="left:1454.50px;width:600px;text-align:center;top:405.15px;font-size:14px;line-height:14px;color:#51565c;font-weight:normal;white-space:nowrap;">0</div>
<div class="abs" style="left:317.00px;top:481.20px;width:1521.80px;height:1.00px;background:#eaecef"></div>
<div class="abs" style="left:47.50px;width:600px;text-align:center;top:451.75px;font-size:14px;line-height:14px;color:#51565c;font-weight:normal;white-space:nowrap;">2</div>
<div class="abs" style="left:391px;top:452.40px;line-height:0"><svg width="14" height="12" viewBox="0 0 14 12"><path d="M9.5 1.2 H2.6 Q1 1.2 1 2.8 V9.4 Q1 11 2.6 11 H9.6 Q11.2 11 11.2 9.4 V6" fill="none" stroke="#008000" stroke-width="1.5"/><path d="M3.6 5.2 L6 7.6 L12.6 1" fill="none" stroke="#008000" stroke-width="2.3"/></svg></div>
<div class="abs" style="left:404.75px;top:451.33px;font-size:14.5px;line-height:14.5px;color:#037a03;font-weight:normal;white-space:nowrap;font-family:'Liberation Serif',serif;letter-spacing:0px">CR Details Added</div>
<div class="abs" style="left:302.00px;width:600px;text-align:center;top:451.75px;font-size:14px;line-height:14px;color:#51565c;font-weight:normal;white-space:nowrap;letter-spacing:-0.14px">112610225013301</div>
<div class="abs" style="left:447.00px;width:600px;text-align:center;top:451.75px;font-size:14px;line-height:14px;color:#51565c;font-weight:normal;white-space:nowrap;letter-spacing:-0.14px">1126101000432</div>
<div class="abs" style="left:578.00px;width:600px;text-align:center;top:451.75px;font-size:14px;line-height:14px;color:#51565c;font-weight:normal;white-space:nowrap;">25</div>
<div class="abs" style="left:756.80px;width:600px;text-align:center;top:451.75px;font-size:14px;line-height:14px;color:#51565c;font-weight:normal;white-space:nowrap;letter-spacing:-0.15px">ASHWINI D D/O DORAISWAMY</div>
<div class="abs" style="left:920.30px;width:600px;text-align:center;top:451.75px;font-size:14px;line-height:14px;color:#51565c;font-weight:normal;white-space:nowrap;">15-02-2025</div>
<div class="abs" style="left:1019.70px;width:600px;text-align:center;top:451.75px;font-size:14px;line-height:14px;color:#51565c;font-weight:normal;white-space:nowrap;">LT1-Urban</div>
<div class="abs" style="left:1139.00px;width:600px;text-align:center;top:451.75px;font-size:14px;line-height:14px;color:#51565c;font-weight:normal;white-space:nowrap;">Residential House</div>
<div class="abs" style="left:1249.50px;width:600px;text-align:center;top:451.75px;font-size:14px;line-height:14px;color:#51565c;font-weight:normal;white-space:nowrap;">2</div>
<div class="abs" style="left:1330.75px;width:600px;text-align:center;top:451.75px;font-size:14px;line-height:14px;color:#51565c;font-weight:normal;white-space:nowrap;">0</div>
<div class="abs" style="left:1454.50px;width:600px;text-align:center;top:451.75px;font-size:14px;line-height:14px;color:#51565c;font-weight:normal;white-space:nowrap;">0</div>
<div class="abs" style="left:317.00px;top:527.80px;width:1521.80px;height:1.00px;background:#eaecef"></div>
<div class="abs" style="left:47.50px;width:600px;text-align:center;top:498.35px;font-size:14px;line-height:14px;color:#51565c;font-weight:normal;white-space:nowrap;">3</div>
<div class="abs" style="left:391px;top:499.00px;line-height:0"><svg width="14" height="12" viewBox="0 0 14 12"><path d="M9.5 1.2 H2.6 Q1 1.2 1 2.8 V9.4 Q1 11 2.6 11 H9.6 Q11.2 11 11.2 9.4 V6" fill="none" stroke="#008000" stroke-width="1.5"/><path d="M3.6 5.2 L6 7.6 L12.6 1" fill="none" stroke="#008000" stroke-width="2.3"/></svg></div>
<div class="abs" style="left:404.75px;top:497.93px;font-size:14.5px;line-height:14.5px;color:#037a03;font-weight:normal;white-space:nowrap;font-family:'Liberation Serif',serif;letter-spacing:0px">CR Details Added</div>
<div class="abs" style="left:302.00px;width:600px;text-align:center;top:498.35px;font-size:14px;line-height:14px;color:#51565c;font-weight:normal;white-space:nowrap;letter-spacing:-0.14px">112610225013302</div>
<div class="abs" style="left:447.00px;width:600px;text-align:center;top:498.35px;font-size:14px;line-height:14px;color:#51565c;font-weight:normal;white-space:nowrap;letter-spacing:-0.14px">1126101000434</div>
<div class="abs" style="left:578.00px;width:600px;text-align:center;top:498.35px;font-size:14px;line-height:14px;color:#51565c;font-weight:normal;white-space:nowrap;">25</div>
<div class="abs" style="left:756.80px;width:600px;text-align:center;top:498.35px;font-size:14px;line-height:14px;color:#51565c;font-weight:normal;white-space:nowrap;letter-spacing:-0.15px">ASHWINI D D/O DORAISWAMY</div>
<div class="abs" style="left:920.30px;width:600px;text-align:center;top:498.35px;font-size:14px;line-height:14px;color:#51565c;font-weight:normal;white-space:nowrap;">15-02-2025</div>
<div class="abs" style="left:1019.70px;width:600px;text-align:center;top:498.35px;font-size:14px;line-height:14px;color:#51565c;font-weight:normal;white-space:nowrap;">LT1-Urban</div>
<div class="abs" style="left:1139.00px;width:600px;text-align:center;top:498.35px;font-size:14px;line-height:14px;color:#51565c;font-weight:normal;white-space:nowrap;">Residential House</div>
<div class="abs" style="left:1249.50px;width:600px;text-align:center;top:498.35px;font-size:14px;line-height:14px;color:#51565c;font-weight:normal;white-space:nowrap;">2</div>
<div class="abs" style="left:1330.75px;width:600px;text-align:center;top:498.35px;font-size:14px;line-height:14px;color:#51565c;font-weight:normal;white-space:nowrap;">0</div>
<div class="abs" style="left:1454.50px;width:600px;text-align:center;top:498.35px;font-size:14px;line-height:14px;color:#51565c;font-weight:normal;white-space:nowrap;">0</div>
<div class="abs" style="left:317.00px;top:574.40px;width:1521.80px;height:1.00px;background:#eaecef"></div>
<div class="abs" style="left:47.50px;width:600px;text-align:center;top:544.95px;font-size:14px;line-height:14px;color:#51565c;font-weight:normal;white-space:nowrap;">4</div>
<div class="abs" style="left:391px;top:545.60px;line-height:0"><svg width="14" height="12" viewBox="0 0 14 12"><path d="M9.5 1.2 H2.6 Q1 1.2 1 2.8 V9.4 Q1 11 2.6 11 H9.6 Q11.2 11 11.2 9.4 V6" fill="none" stroke="#008000" stroke-width="1.5"/><path d="M3.6 5.2 L6 7.6 L12.6 1" fill="none" stroke="#008000" stroke-width="2.3"/></svg></div>
<div class="abs" style="left:404.75px;top:544.53px;font-size:14.5px;line-height:14.5px;color:#037a03;font-weight:normal;white-space:nowrap;font-family:'Liberation Serif',serif;letter-spacing:0px">CR Details Added</div>
<div class="abs" style="left:302.00px;width:600px;text-align:center;top:544.95px;font-size:14px;line-height:14px;color:#51565c;font-weight:normal;white-space:nowrap;letter-spacing:-0.14px">112610225013302</div>
<div class="abs" style="left:447.00px;width:600px;text-align:center;top:544.95px;font-size:14px;line-height:14px;color:#51565c;font-weight:normal;white-space:nowrap;letter-spacing:-0.14px">1126101000434</div>
<div class="abs" style="left:578.00px;width:600px;text-align:center;top:544.95px;font-size:14px;line-height:14px;color:#51565c;font-weight:normal;white-space:nowrap;">25</div>
<div class="abs" style="left:756.80px;width:600px;text-align:center;top:544.95px;font-size:14px;line-height:14px;color:#51565c;font-weight:normal;white-space:nowrap;letter-spacing:-0.15px">ASHWINI D D/O DORAISWAMY</div>
<div class="abs" style="left:920.30px;width:600px;text-align:center;top:544.95px;font-size:14px;line-height:14px;color:#51565c;font-weight:normal;white-space:nowrap;">15-02-2025</div>
<div class="abs" style="left:1019.70px;width:600px;text-align:center;top:544.95px;font-size:14px;line-height:14px;color:#51565c;font-weight:normal;white-space:nowrap;">LT1-Urban</div>
<div class="abs" style="left:1139.00px;width:600px;text-align:center;top:544.95px;font-size:14px;line-height:14px;color:#51565c;font-weight:normal;white-space:nowrap;">Residential House</div>
<div class="abs" style="left:1249.50px;width:600px;text-align:center;top:544.95px;font-size:14px;line-height:14px;color:#51565c;font-weight:normal;white-space:nowrap;">1</div>
<div class="abs" style="left:1330.75px;width:600px;text-align:center;top:544.95px;font-size:14px;line-height:14px;color:#51565c;font-weight:normal;white-space:nowrap;">0</div>
<div class="abs" style="left:1454.50px;width:600px;text-align:center;top:544.95px;font-size:14px;line-height:14px;color:#51565c;font-weight:normal;white-space:nowrap;">0</div>
<div class="abs" style="left:317.00px;top:621.00px;width:1521.80px;height:1.00px;background:#eaecef"></div>
<div class="abs" style="left:47.50px;width:600px;text-align:center;top:591.55px;font-size:14px;line-height:14px;color:#51565c;font-weight:normal;white-space:nowrap;">5</div>
<div class="abs" style="left:391px;top:592.20px;line-height:0"><svg width="14" height="12" viewBox="0 0 14 12"><path d="M9.5 1.2 H2.6 Q1 1.2 1 2.8 V9.4 Q1 11 2.6 11 H9.6 Q11.2 11 11.2 9.4 V6" fill="none" stroke="#008000" stroke-width="1.5"/><path d="M3.6 5.2 L6 7.6 L12.6 1" fill="none" stroke="#008000" stroke-width="2.3"/></svg></div>
<div class="abs" style="left:404.75px;top:591.13px;font-size:14.5px;line-height:14.5px;color:#037a03;font-weight:normal;white-space:nowrap;font-family:'Liberation Serif',serif;letter-spacing:0px">CR Details Added</div>
<div class="abs" style="left:302.00px;width:600px;text-align:center;top:591.55px;font-size:14px;line-height:14px;color:#51565c;font-weight:normal;white-space:nowrap;letter-spacing:-0.14px">112610225013303</div>
<div class="abs" style="left:447.00px;width:600px;text-align:center;top:591.55px;font-size:14px;line-height:14px;color:#51565c;font-weight:normal;white-space:nowrap;letter-spacing:-0.14px">1126101000436</div>
<div class="abs" style="left:578.00px;width:600px;text-align:center;top:591.55px;font-size:14px;line-height:14px;color:#51565c;font-weight:normal;white-space:nowrap;">50</div>
<div class="abs" style="left:756.80px;width:600px;text-align:center;top:591.55px;font-size:14px;line-height:14px;color:#51565c;font-weight:normal;white-space:nowrap;letter-spacing:-0.15px">ASHWINI D D/O DORAISWAMY</div>
<div class="abs" style="left:920.30px;width:600px;text-align:center;top:591.55px;font-size:14px;line-height:14px;color:#51565c;font-weight:normal;white-space:nowrap;">15-02-2025</div>
<div class="abs" style="left:1019.70px;width:600px;text-align:center;top:591.55px;font-size:14px;line-height:14px;color:#51565c;font-weight:normal;white-space:nowrap;">LT3A-Urban</div>
<div class="abs" style="left:1139.00px;width:600px;text-align:center;top:591.55px;font-size:14px;line-height:14px;color:#51565c;font-weight:normal;white-space:nowrap;">Shops</div>
<div class="abs" style="left:1249.50px;width:600px;text-align:center;top:591.55px;font-size:14px;line-height:14px;color:#51565c;font-weight:normal;white-space:nowrap;">1</div>
<div class="abs" style="left:1330.75px;width:600px;text-align:center;top:591.55px;font-size:14px;line-height:14px;color:#51565c;font-weight:normal;white-space:nowrap;">0</div>
<div class="abs" style="left:1454.50px;width:600px;text-align:center;top:591.55px;font-size:14px;line-height:14px;color:#51565c;font-weight:normal;white-space:nowrap;">0</div>
<div class="abs" style="left:317.00px;top:667.60px;width:1521.80px;height:1.00px;background:#eaecef"></div>
<div class="abs" style="left:47.50px;width:600px;text-align:center;top:638.15px;font-size:14px;line-height:14px;color:#51565c;font-weight:normal;white-space:nowrap;">6</div>
<div class="abs" style="left:391px;top:638.80px;line-height:0"><svg width="14" height="12" viewBox="0 0 14 12"><path d="M9.5 1.2 H2.6 Q1 1.2 1 2.8 V9.4 Q1 11 2.6 11 H9.6 Q11.2 11 11.2 9.4 V6" fill="none" stroke="#008000" stroke-width="1.5"/><path d="M3.6 5.2 L6 7.6 L12.6 1" fill="none" stroke="#008000" stroke-width="2.3"/></svg></div>
<div class="abs" style="left:404.75px;top:637.73px;font-size:14.5px;line-height:14.5px;color:#037a03;font-weight:normal;white-space:nowrap;font-family:'Liberation Serif',serif;letter-spacing:0px">CR Details Added</div>
<div class="abs" style="left:302.00px;width:600px;text-align:center;top:638.15px;font-size:14px;line-height:14px;color:#51565c;font-weight:normal;white-space:nowrap;letter-spacing:-0.14px">112610225013303</div>
<div class="abs" style="left:447.00px;width:600px;text-align:center;top:638.15px;font-size:14px;line-height:14px;color:#51565c;font-weight:normal;white-space:nowrap;letter-spacing:-0.14px">1126101000436</div>
<div class="abs" style="left:578.00px;width:600px;text-align:center;top:638.15px;font-size:14px;line-height:14px;color:#51565c;font-weight:normal;white-space:nowrap;">50</div>
<div class="abs" style="left:756.80px;width:600px;text-align:center;top:638.15px;font-size:14px;line-height:14px;color:#51565c;font-weight:normal;white-space:nowrap;letter-spacing:-0.15px">ASHWINI D D/O DORAISWAMY</div>
<div class="abs" style="left:920.30px;width:600px;text-align:center;top:638.15px;font-size:14px;line-height:14px;color:#51565c;font-weight:normal;white-space:nowrap;">15-02-2025</div>
<div class="abs" style="left:1019.70px;width:600px;text-align:center;top:638.15px;font-size:14px;line-height:14px;color:#51565c;font-weight:normal;white-space:nowrap;">LT3A-Urban</div>
<div class="abs" style="left:1139.00px;width:600px;text-align:center;top:638.15px;font-size:14px;line-height:14px;color:#51565c;font-weight:normal;white-space:nowrap;">Shops</div>
<div class="abs" style="left:1249.50px;width:600px;text-align:center;top:638.15px;font-size:14px;line-height:14px;color:#51565c;font-weight:normal;white-space:nowrap;">2</div>
<div class="abs" style="left:1330.75px;width:600px;text-align:center;top:638.15px;font-size:14px;line-height:14px;color:#51565c;font-weight:normal;white-space:nowrap;">0</div>
<div class="abs" style="left:1454.50px;width:600px;text-align:center;top:638.15px;font-size:14px;line-height:14px;color:#51565c;font-weight:normal;white-space:nowrap;">0</div>
<div class="abs" style="left:317.00px;top:685.15px;font-size:14px;line-height:14px;color:#51565c;font-weight:normal;white-space:nowrap;letter-spacing:0.1px">Showing 1 to 6 of 6 entries</div>
<div class="abs" style="left:1672.30px;top:671.10px;width:78.00px;height:34.50px;background:#f8f9fa;border:1px solid #dee2e6;border-right:none;border-radius:4px 0 0 4px"></div>
<div class="abs" style="left:1750.30px;top:670.60px;width:33.50px;height:35.50px;background:#0a8cdb;border-radius:5px"></div>
<div class="abs" style="left:1783.80px;top:671.10px;width:54.70px;height:34.50px;background:#f8f9fa;border:1px solid #dee2e6;border-left:none;border-radius:0 4px 4px 0"></div>
<div class="abs" style="left:1411.30px;width:600px;text-align:center;top:681.84px;font-size:13.6px;line-height:13.6px;color:#a6b0bd;font-weight:normal;white-space:nowrap;">Previous</div>
<div class="abs" style="left:1467.05px;width:600px;text-align:center;top:681.50px;font-size:14px;line-height:14px;color:#fff;font-weight:normal;white-space:nowrap;">1</div>
<div class="abs" style="left:1511.15px;width:600px;text-align:center;top:681.84px;font-size:13.6px;line-height:13.6px;color:#a6b0bd;font-weight:normal;white-space:nowrap;">Next</div>
<div class="abs" style="left:299.00px;top:768.75px;width:1558.00px;height:122.25px;border:1px solid #dddddd;border-radius:4px;background:#fff"></div>
<div class="abs" style="left:299.00px;top:806.00px;width:1558.00px;height:2.00px;background:#dcdcdc"></div>
<div class="abs" style="left:303.30px;top:773.20px;width:186.80px;height:33.80px;background:#468cb8;border-top:2px solid #1f4fe0;border-radius:4px 4px 0 0;border-left:1px solid #2a62c9;border-right:1px solid #2a62c9"></div>
<div class="abs" style="left:96.70px;width:600px;text-align:center;top:784.38px;font-size:14.2px;line-height:14.2px;color:#fff;font-weight:normal;white-space:nowrap;-webkit-text-stroke-width:0.5px;letter-spacing:0.43px">Connection Information</div>
<div class="abs" style="left:493.30px;top:773.20px;width:108.40px;height:33.80px;background:#f5f5f5;border:1px solid #dcdcdc;border-bottom:none;border-radius:4px 4px 0 0"></div>
<div class="abs" style="left:247.50px;width:600px;text-align:center;top:784.38px;font-size:14.2px;line-height:14.2px;color:#444;font-weight:normal;white-space:nowrap;-webkit-text-stroke-width:0.5px;letter-spacing:0.2px">Area Details</div>
<div class="abs" style="left:605.30px;top:773.20px;width:117.20px;height:33.80px;background:#f5f5f5;border:1px solid #dcdcdc;border-bottom:none;border-radius:4px 4px 0 0"></div>
<div class="abs" style="left:363.90px;width:600px;text-align:center;top:784.38px;font-size:14.2px;line-height:14.2px;color:#444;font-weight:normal;white-space:nowrap;-webkit-text-stroke-width:0.5px;letter-spacing:0.2px">Meter Details</div>
<div class="abs" style="left:726.30px;top:773.20px;width:131.20px;height:33.80px;background:#f5f5f5;border:1px solid #dcdcdc;border-bottom:none;border-radius:4px 4px 0 0"></div>
<div class="abs" style="left:491.90px;width:600px;text-align:center;top:784.38px;font-size:14.2px;line-height:14.2px;color:#444;font-weight:normal;white-space:nowrap;-webkit-text-stroke-width:0.5px;letter-spacing:0.2px">Amount Details</div>
<div class="abs" style="left:861.30px;top:773.20px;width:116.40px;height:33.80px;background:#f5f5f5;border:1px solid #dcdcdc;border-bottom:none;border-radius:4px 4px 0 0"></div>
<div class="abs" style="left:619.50px;width:600px;text-align:center;top:784.38px;font-size:14.2px;line-height:14.2px;color:#444;font-weight:normal;white-space:nowrap;-webkit-text-stroke-width:0.5px;letter-spacing:0.2px">Other Details</div>
<div class="abs" style="left:314.80px;top:825.78px;font-size:14.2px;line-height:14.2px;color:#222;font-weight:normal;white-space:nowrap;-webkit-text-stroke-width:0.45px;letter-spacing:0px">RR No<span style="color:#e00">*</span></div>
<div class="abs" style="left:314.80px;top:852.50px;width:365.20px;height:38.50px;border:1px solid #dfe1e5;border-radius:4px;background:#fff"></div>
<div class="abs" style="left:701.50px;top:825.78px;font-size:14.2px;line-height:14.2px;color:#222;font-weight:normal;white-space:nowrap;-webkit-text-stroke-width:0.45px;letter-spacing:0px">Cons Name<span style="color:#e00">*</span></div>
<div class="abs" style="left:701.50px;top:852.50px;width:366.00px;height:38.50px;border:1px solid #dfe1e5;border-radius:4px;background:#fff"></div>
<div class="abs" style="left:1088.40px;top:825.78px;font-size:14.2px;line-height:14.2px;color:#222;font-weight:normal;white-space:nowrap;-webkit-text-stroke-width:0.45px;letter-spacing:0px">Father Name</div>
<div class="abs" style="left:1088.40px;top:852.50px;width:366.10px;height:38.50px;border:1px solid #dfe1e5;border-radius:4px;background:#fff"></div>
<div class="abs" style="left:1475.00px;top:825.78px;font-size:14.2px;line-height:14.2px;color:#222;font-weight:normal;white-space:nowrap;-webkit-text-stroke-width:0.45px;letter-spacing:0px">Address<span style="color:#e00">*</span></div>
<div class="abs" style="left:1475.00px;top:852.50px;width:366.00px;height:38.50px;border:1px solid #dfe1e5;border-radius:4px;background:#fff"></div>
<div id="scrollbar"><svg class="abs" style="left:3px;top:7.5px" width="14" height="8" viewBox="0 0 14 8"><path d="M1 7.3 L7 0.8 L13 7.3Z" fill="#8a8a8a"/></svg><div class="abs" style="left:5px;top:229px;width:11px;height:383px;border-radius:5.5px;background:#8a8a8a"></div><svg class="abs" style="left:3px;top:906.5px" width="14" height="8" viewBox="0 0 14 8"><path d="M1 0.7 L13 0.7 L7 7.2Z" fill="#8a8a8a"/></svg></div>
<div id="header">
<div class="abs" style="left:617px;top:6px;line-height:0"><svg width="42" height="60" viewBox="0 0 42 60">
<path d="M2 7.5 Q1.5 4 4 4 Q6.5 4 6 7.5 M4 3.5 Q5 1 7.5 2 M10 8 Q9 4.5 11.5 4.5 Q14 4.5 13.5 8 Q12.5 6 11.5 8 M13 3.5 Q15 1.5 16.5 3 M19 4.5 Q22 3.5 22.5 6 Q22 8 19.5 8 Q21 6 19 5.5 M21 3 Q23 1.5 24.5 2.8 M27 6 A2.2 2.2 0 1 0 31.5 6 A2.2 2.2 0 1 0 27 6" fill="none" stroke="#0b8fdc" stroke-width="1.5"/>
<path d="M1 9.5 H24 C35 9.5 39 15 38.5 22.5 C38.2 27 36 29.5 33.5 31 C38.5 33 41.5 37.5 41 44 C40.5 50.5 36 52.5 29 52.5 H1Z" fill="#0b8fdc"/>
<circle cx="17" cy="31" r="14" fill="#fff"/>
<path d="M15.6 21 V45" stroke="#0b8fdc" stroke-width="1.8"/>
<path d="M6 34 L13 28 L17 27 L21 23 L25 20.5" fill="none" stroke="#0b8fdc" stroke-width="2.2"/>
<path d="M9 38 L14 33" stroke="#0b8fdc" stroke-width="1.6"/>
<path d="M4 27.5 Q16 25 30 27 M4 33.5 Q16 31 30 33" stroke="#7cc3ee" stroke-width="0.6" fill="none"/>
<text x="1" y="59" font-family="Liberation Sans" font-weight="bold" font-size="6.8" fill="#0b8fdc" textLength="34" lengthAdjust="spacingAndGlyphs">BESCOM</text>
</svg></div>
<div class="abs" style="left:665.40px;top:21.76px;font-size:18px;line-height:18px;color:#3f4651;font-weight:bold;white-space:nowrap;letter-spacing:-0.3px">Bangalore Electricity Supply Company Limited (BESCOM)</div>
<div class="abs" style="left:1221.20px;top:33.38px;font-size:22px;line-height:22px;color:#555b6e;font-weight:normal;white-space:nowrap;transform:scaleX(0.872);transform-origin:0 0">USER DETAILS</div>
<svg class="abs" style="left:1366px;top:32px" width="22" height="22" viewBox="0 0 22 22"><circle cx="11" cy="11" r="10.8" fill="#555b6e"/><path d="M6.5 9 L11 13.5 L15.5 9" fill="none" stroke="#fff" stroke-width="3" stroke-linecap="round" stroke-linejoin="round"/></svg>
<div class="abs" style="left:1416px;top:-1px;width:52px;height:52px;border-radius:26px;background:#fffcfd"></div>
<svg class="abs" style="left:1419px;top:29px" width="28" height="32" viewBox="0 0 28 32"><path d="M3.2 20.6 Q5.6 17.5 5.6 13.5 V9.5 Q5.6 3.2 14 3.2 Q22.4 3.2 22.4 9.5 V13.5 Q22.4 17.5 24.8 20.6" fill="none" stroke="#555b6e" stroke-width="2" stroke-linejoin="round"/><path d="M1.8 21 H26.2" stroke="#555b6e" stroke-width="2.2" stroke-linecap="round"/><path d="M11 25.3 Q14 29.4 17 25.3" fill="none" stroke="#555b6e" stroke-width="2"/></svg>
<div class="abs" style="left:1427px;top:9px;width:30px;height:28px;border-radius:15px;background:#f04d4f"></div>
<div class="abs" style="left:1442.00px;top:16.15px;font-size:14px;line-height:14px;color:#fff;font-weight:bold;white-space:nowrap;letter-spacing:-0.2px;width:60px;margin-left:-30px;text-align:center">899</div>
<div class="abs" style="left:1478px;top:21px;width:44px;height:44px;border-radius:22px;border:1px solid #e3e5e8;background:#fff"></div>
<svg class="abs" style="left:1484px;top:28px" width="32" height="32" viewBox="0 0 32 32"><circle cx="16" cy="16" r="16" fill="#000"/><circle cx="16" cy="13.2" r="5.3" fill="#fff"/><path d="M6.4 25.6 Q8.5 20.6 16 20.6 Q23.5 20.6 25.6 25.6 Q21.5 29 16 29 Q10.5 29 6.4 25.6Z" fill="#fff"/></svg>
<div class="abs" style="left:1533.00px;top:24.53px;font-size:16.5px;line-height:16.5px;color:#3d4550;font-weight:normal;white-space:nowrap;-webkit-text-stroke:0.5px #3d4550;letter-spacing:-0.3px">ALL</div>
<div class="abs" style="left:1533.00px;top:49.83px;font-size:13.2px;line-height:13.2px;color:#6b7184;font-weight:normal;white-space:nowrap;">VIDYANAGAR</div>
</div>
<div id="footer"><div style="position:absolute;left:0;width:1645px;top:23px;text-align:center;font-size:12.2px;line-height:14px;font-weight:bold;color:#111">2025 © Idea Infinity IT Solutions (P)Ltd.(TRM V 2.2)</div></div>
<div class="abs" style="left:1554.7px;top:819.3px;font-size:24.7px;line-height:24.7px;color:#c6c6c6;white-space:nowrap">Activate Windows</div>
<div class="abs" style="left:1554.7px;top:851.6px;font-size:18px;line-height:18px;color:#c6c6c6;white-space:nowrap">Go to Settings to activate Windows.</div>

</div>
</body></html>
